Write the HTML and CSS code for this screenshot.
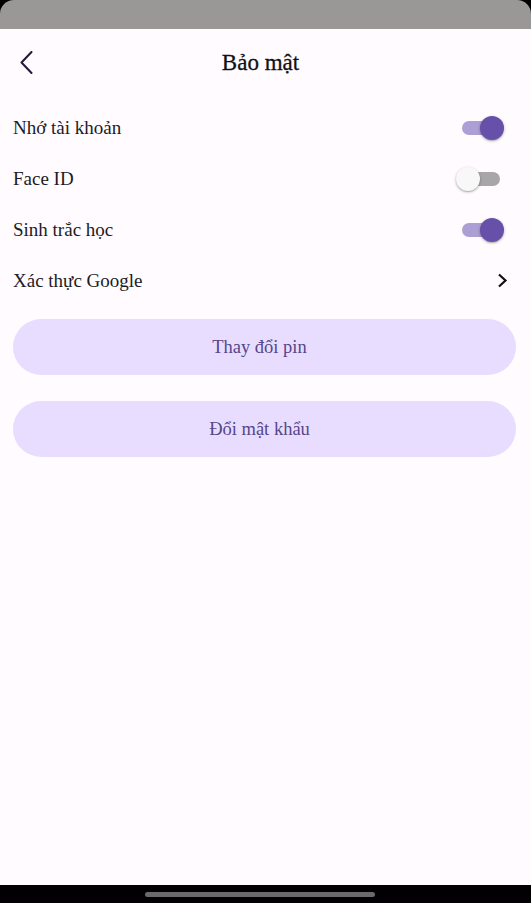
FILE: index.html
```html
<!DOCTYPE html>
<html lang="vi">
<head>
<meta charset="utf-8">
<title>Bảo mật</title>
<link rel="stylesheet" href="styles.css">
</head>
<body>
<div class="screen">
  <div class="status"></div>
  <div class="sheet">
    <header class="header">
      <button class="back" aria-label="Quay lại">
        <svg width="13" height="23" viewBox="0 0 13 23"><polyline points="11.5,1 1.5,11.5 11.5,22" fill="none" stroke="#1d1b3a" stroke-width="2" stroke-linecap="round" stroke-linejoin="round"/></svg>
      </button>
      <h1 class="title">Bảo mật</h1>
    </header>
    <div class="list">
      <div class="row">
        <span class="label">Nhớ tài khoản</span>
        <span class="switch on"><span class="track"></span><span class="thumb"></span></span>
      </div>
      <div class="row">
        <span class="label">Face ID</span>
        <span class="switch off"><span class="track"></span><span class="thumb"></span></span>
      </div>
      <div class="row">
        <span class="label">Sinh trắc học</span>
        <span class="switch on"><span class="track"></span><span class="thumb"></span></span>
      </div>
      <div class="row link">
        <span class="label">Xác thực Google</span>
        <svg class="chev" width="12" height="15" viewBox="0 0 12 15"><polyline points="2,1.5 8.5,7.5 2,13.5" fill="none" stroke="#111" stroke-width="2.2" stroke-linejoin="miter"/></svg>
      </div>
    </div>
    <div class="actions">
      <button class="pill">Thay đổi pin</button>
      <button class="pill">Đổi mật khẩu</button>
    </div>
  </div>
  <div class="navbar"><span class="handle"></span></div>
</div>
</body>
</html>
```

FILE: styles.css
```css
* { box-sizing: border-box; }
html, body { margin: 0; padding: 0; }
body {
  background: #000;
  font-family: "Liberation Serif", "Times New Roman", serif;
  color: #1c1b1f;
}
.screen {
  width: 531px;
  height: 903px;
  display: flex;
  flex-direction: column;
  overflow: hidden;
  background: #000;
}
.status {
  height: 29px;
  flex: none;
  background: #9a9797;
  border-radius: 14px 14px 0 0;
}
.sheet {
  flex: 1;
  background: #fffbff;
  display: flex;
  flex-direction: column;
}
.header {
  height: 66px;
  display: flex;
  align-items: center;
  justify-content: center;
  position: relative;
  padding-right: 10px;
}
.back {
  position: absolute;
  left: 20px;
  top: 22px;
  border: 0;
  background: none;
  padding: 0;
  width: 13px;
  height: 23px;
  display: flex;
}
.title {
  margin: 0;
  font-size: 23px;
  font-weight: normal;
  color: #111;
  line-height: 1;
  -webkit-text-stroke: 0.3px #111;
}
.list {
  padding-top: 7px;
  display: flex;
  flex-direction: column;
}
.row {
  height: 51px;
  display: flex;
  align-items: center;
  justify-content: space-between;
  padding: 0 27px 0 13px;
}
.row.link { padding-right: 22px; }
.label {
  font-size: 19px;
  color: #1c1b1f;
}
.switch {
  position: relative;
  width: 48px;
  height: 26px;
  flex: none;
}
.track {
  position: absolute;
  left: 6px;
  top: 6px;
  width: 38px;
  height: 14px;
  border-radius: 7px;
}
.thumb {
  position: absolute;
  top: 1px;
  width: 24px;
  height: 24px;
  border-radius: 50%;
  box-shadow: 0 1px 3px rgba(0,0,0,0.28), 0 1px 1px rgba(0,0,0,0.12);
}
.on .track { background: #ab9fd4; }
.on .thumb { left: 24px; background: #6750a9; }
.off .track { background: #a9a6a9; }
.off .thumb { left: 0; background: #f8f8f8; }
.chev { display: block; }
.actions {
  padding: 13px 15px 0 13px;
  display: flex;
  flex-direction: column;
  gap: 26px;
}
.pill {
  height: 56px;
  border: 0;
  border-radius: 28px;
  background: #e9ddff;
  color: #56468a;
  font-family: "Liberation Serif", "Times New Roman", serif;
  font-size: 18.5px;
  padding: 0 10px 0 0;
}
.navbar {
  height: 18px;
  flex: none;
  background: #020003;
  display: flex;
  justify-content: center;
  padding-top: 7px;
}
.handle {
  width: 230px;
  height: 5px;
  border-radius: 3px;
  background: #6a6a6a;
  margin-right: 11px;
}
```
